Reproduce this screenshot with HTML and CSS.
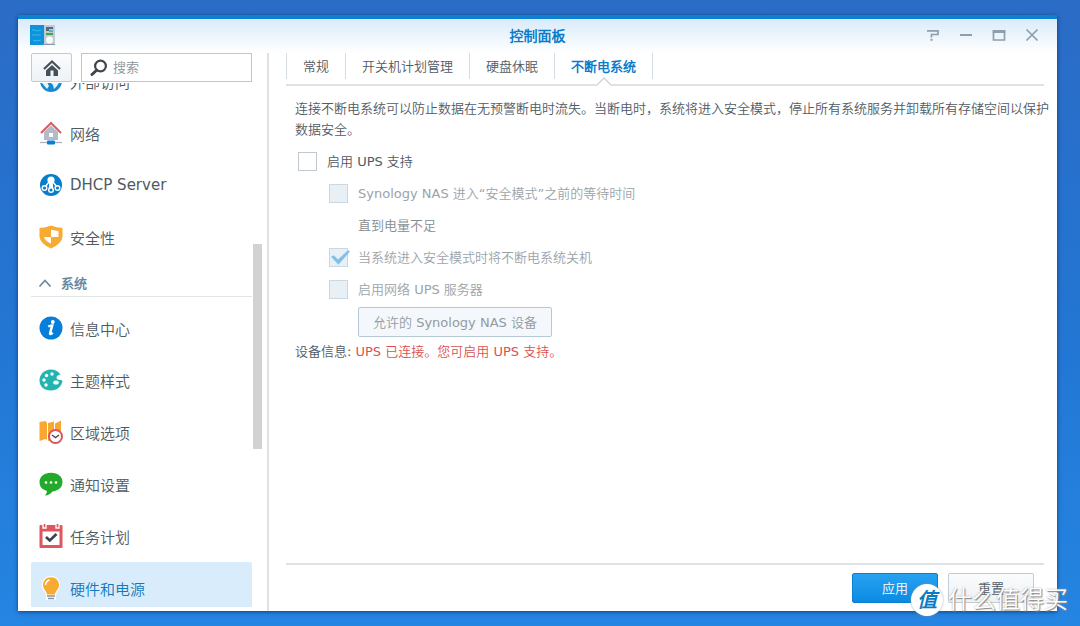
FILE: index.html
```html
<!DOCTYPE html>
<html lang="zh-CN">
<head>
<meta charset="utf-8">
<meta name="viewport" content="width=device-width, initial-scale=1">
<title>控制面板</title>
<link rel="stylesheet" href="styles.css">
</head>
<body class="desktop">
<div class="window">
  <header class="titlebar">
    <svg class="app-icon" viewBox="0 0 26 22" aria-hidden="true">
      <rect x="13" y="1" width="12" height="20" fill="#c3cbd2"/><rect x="0" y="1" width="14" height="20" fill="#0d93dc"/>
      <path d="M2 6h3l2 1 4-1M2 11h9M3 16l3 1 5-1" stroke="#39b9ee" fill="none"/>
      <path d="M16 4h7M16 6h3" stroke="#34495c" stroke-width="1.4"/><path d="M19 7h4" stroke="#1ca6df" stroke-width="1.4"/><path d="M16 10h7" stroke="#39ad45" stroke-width="2"/>
      <circle cx="19.500" cy="16" r="3.400" fill="#fff"/><path d="M13 20.500h12" stroke="#8d99a4"/>
    </svg>
    <h1 class="title">控制面板</h1>
    <div class="controls">
      <button class="control" aria-label="帮助"><svg viewBox="0 0 14 14"><path d="M1 2.800h11v3.700H5.500v3" fill="none" stroke="#8f9dad" stroke-width="1.700"/><path d="M4.500 10.800h2v2h-2z" fill="#8f9dad"/></svg></button>
      <button class="control" aria-label="最小化"><svg viewBox="0 0 14 14"><path d="M1 7h12" stroke="#8f9dad" stroke-width="2"/></svg></button>
      <button class="control" aria-label="最大化"><svg viewBox="0 0 14 14"><path d="M1.500 2.500v9.500h11v-9.500" fill="none" stroke="#8f9dad" stroke-width="1.700"/><path d="M.700 3.500h12.600" stroke="#8f9dad" stroke-width="3"/></svg></button>
      <button class="control" aria-label="关闭"><svg viewBox="0 0 14 14"><path d="M1.500 1.500l11 11M12.500 1.500l-11 11" stroke="#8f9dad" stroke-width="1.700"/></svg></button>
    </div>
  </header>

  <div class="body">
    <aside class="sidebar">
      <div class="tools">
        <button class="home" aria-label="主页"><svg viewBox="0 0 18 18"><path d="M1 10L9 2.500 17 10" fill="none" stroke="#46505a" stroke-width="2.200"/><path d="M3 11.500L9 6l6 5.500V17H3z" fill="#46505a"/><path d="M7.500 11.500h3V17h-3z" fill="#f3f6f9"/></svg></button>
        <div class="search">
          <svg class="search-icon" viewBox="0 0 18 18" aria-hidden="true"><circle cx="10.500" cy="7" r="5.400" fill="none" stroke="#3e454c" stroke-width="2.200"/><path d="M6.300 11.500L2 15.500" stroke="#3e454c" stroke-width="3" stroke-linecap="round"/></svg>
          <input class="search-input" type="text" placeholder="搜索" aria-label="搜索">
        </div>
      </div>
      <div class="scroller">
        <nav class="nav">
          <a class="item first" href="#"><svg class="icon" viewBox="0 0 24 24"><circle cx="12" cy="12" r="11" fill="#1689d6"/><path d="M3 6l7-2 1 5-3 4 2 4-2 3-5-6zM14 11l7 1-3 5-3 3-1-4-2-2z" fill="#e6f4fc"/></svg>外部访问</a>
          <a class="item" href="#"><svg class="icon" viewBox="0 0 24 24"><path d="M5 11l7-6.500 7 6.500v8H5z" fill="#b2bbc7"/><path d="M10 12h4v4h-4z" fill="#fff"/><path d="M2 12L12 2l10 10" fill="none" stroke="#dc5c61" stroke-width="2"/><path d="M1 21.500h22" stroke="#aab4c0" stroke-width="1.300"/><rect x="8" y="19.500" width="8" height="4" rx="1" fill="#087fd0"/></svg>网络</a>
          <a class="item" href="#"><svg class="icon" viewBox="0 0 24 24"><circle cx="12" cy="12" r="11" fill="#087dce"/><circle cx="12" cy="7" r="3.600" fill="#fff"/><path d="M11 9h2l.5 6h-3zM10 9L6 14M14 9l4 5" fill="#fff" stroke="#fff" stroke-width="1.400"/><g fill="#087dce" stroke="#fff" stroke-width="1.400"><circle cx="5.500" cy="15" r="2.300"/><circle cx="12" cy="17" r="2.300"/><circle cx="18.500" cy="15" r="2.300"/></g></svg>DHCP Server</a>
          <a class="item" href="#"><svg class="icon" viewBox="0 0 24 24"><path d="M.500 3Q7 2.500 12 .500 17 2.500 23.500 3v9q-1 7-11.500 11.500Q1.500 19 .500 12z" fill="#f8aa31"/><path d="M12 4.500q4 1.200 7.500 1.500v6H12v6.500Q6 16 5 12h7z" fill="#fff"/></svg>安全性</a>
          <h2 class="group"><svg class="chevron" viewBox="0 0 14 14" aria-hidden="true"><path d="M1.500 10.500L7 4.500l5.500 6" fill="none" stroke="#6889a2" stroke-width="1.700"/></svg>系统</h2>
          <a class="item" href="#"><svg class="icon" viewBox="0 0 24 24"><circle cx="12" cy="12" r="11.500" fill="#087edb"/><circle cx="13.800" cy="6" r="1.900" fill="#fff"/><path d="M9.200 10.500q2-.800 4-1l-2.200 8q-.200 1.500 2.700-.700" fill="none" stroke="#fff" stroke-width="2.400"/></svg>信息中心</a>
          <a class="item" href="#"><svg class="icon" viewBox="0 0 24 24"><path d="M12 1.500C5 1.500.500 6.500.500 12.500S5 22.500 12 22.500c6 0 10.500-4 11.500-9.500l-1.500-1q-4 .500-4.500-2t4-3.500C19 3 16 1.500 12 1.500z" fill="#22b5b0"/><g fill="#fff"><circle cx="5" cy="12" r="1.700"/><circle cx="7.500" cy="7.500" r="1.700"/><circle cx="13" cy="6" r="1.700"/><circle cx="7" cy="17" r="1.700"/><ellipse cx="17" cy="14.500" rx="2.800" ry="2"/></g></svg>主题样式</a>
          <a class="item" href="#"><svg class="icon" viewBox="0 0 24 24"><path d="M.500 2l6-1 1.500 2v17l-1.500-1-6 2zM9 3l6-1.500V20l-6 1zM16 3.500l6-3V17h-6z" fill="#f8a832"/><circle cx="16.500" cy="16.500" r="6.500" fill="#fff" stroke="#dc555d" stroke-width="2"/><path d="M13 15l3.500 2.500L20 15" fill="none" stroke="#46505a" stroke-width="1.500"/></svg>区域选项</a>
          <a class="item" href="#"><svg class="icon" viewBox="0 0 24 24"><path d="M12 .800c7 0 11.500 4 11.500 9.200 0 6-5 9-10 9.400Q11 23 6 23.500q2-2 2-4.500C3 17.500.500 14.500.500 10 .500 5 5 .800 12 .800z" fill="#24aa2b"/><g fill="#fff"><circle cx="7" cy="10.500" r="1.300"/><circle cx="12" cy="10.500" r="1.300"/><circle cx="17" cy="10.500" r="1.300"/></g></svg>通知设置</a>
          <a class="item" href="#"><svg class="icon" viewBox="0 0 24 24"><rect x=".500" y="1" width="23" height="23" rx="1" fill="#df575c"/><path d="M3.500 7.500h17V21h-17z" fill="#fff"/><path d="M4 0v4h3V0M17 0v4h3V0" fill="#df575c" stroke="#fff" stroke-width="1.300"/><path d="M7 13l3.800 3.500L17.500 10" fill="none" stroke="#38444d" stroke-width="2.600"/></svg>任务计划</a>
          <a class="item active" href="#" aria-current="page"><svg class="icon" viewBox="0 0 24 24"><path d="M12 0c5.500 0 9 4 9 9 0 4-3 6.500-4 9.500V24H7v-5.500C6 15.500 3 13 3 9c0-5 3.500-9 9-9z" fill="#fff"/><path d="M12 1.200c5 0 8 3.500 8 7.800 0 4-3.500 6-4 9.500H8C7.500 15 4 13 4 9c0-4.300 3-7.800 8-7.800z" fill="#f8ab32"/><path d="M6.500 9q.500-4 4-5" fill="none" stroke="#fff" stroke-width="1.500"/><path d="M8 20h8M9 22.500h6" stroke="#89939a" stroke-width="1.500"/></svg>硬件和电源</a>
        </nav>
        <div class="track"><div class="thumb"></div></div>
      </div>
    </aside>

    <main class="main">
      <div class="tabs" role="tablist">
        <button class="tab" role="tab" aria-selected="false">常规</button>
        <button class="tab" role="tab" aria-selected="false">开关机计划管理</button>
        <button class="tab" role="tab" aria-selected="false">硬盘休眠</button>
        <button class="tab selected" role="tab" aria-selected="true">不断电系统<svg class="notch" viewBox="0 0 14 9" aria-hidden="true"><path d="M0 9V8L7 1l7 7v1z" fill="#fff"/><path d="M0 8L7 1l7 7" fill="none" stroke="#d3d7da" stroke-width="1.500"/></svg></button>
      </div>
      <form class="content">
        <p class="intro">连接不断电系统可以防止数据在无预警断电时流失。当断电时，系统将进入安全模式，停止所有系统服务并卸载所有存储空间以保护数据安全。</p>
        <div class="row"><input class="check" type="checkbox" id="ups"><label for="ups">启用 UPS 支持</label></div>
        <div class="sub">
          <div class="row muted"><input class="check" type="checkbox" id="wait" disabled><label for="wait">Synology NAS 进入“安全模式”之前的等待时间</label></div>
          <div class="row note">直到电量不足</div>
          <div class="row muted"><input class="check" type="checkbox" id="off" checked disabled><label for="off">当系统进入安全模式时将不断电系统关机</label></div>
          <div class="row muted"><input class="check" type="checkbox" id="server" disabled><label for="server">启用网络 UPS 服务器</label></div>
          <button class="button devices" type="button" disabled>允许的 Synology NAS 设备</button>
        </div>
        <p class="info">设备信息: <span class="status">UPS 已连接。您可启用 UPS 支持。</span></p>
      </form>
      <footer class="footer">
        <button class="button primary" type="button">应用</button>
        <button class="button" type="button">重置</button>
      </footer>
    </main>
  </div>
</div>
<div class="watermark"><span class="badge">值</span><span>什么值得买</span></div>
</body>
</html>
```

FILE: styles.css
```css
* { box-sizing: border-box; }

.desktop {
  position: relative;
  display: flex;
  min-height: 100vh;
  margin: 0;
  padding: 15px 23px 15px 18px;
  overflow: hidden;
  background: linear-gradient(#2b6cc6, #2375d2 50%, #2585e2);
  color: #505a63;
  font-family: "DejaVu Sans", "Noto Sans CJK SC DemiLight", "Noto Sans CJK SC Light", "Noto Sans CJK SC", sans-serif;
  font-size: 13px;
  font-weight: 400;
}

button, input { font: inherit; color: inherit; }
svg { display: block; flex: none; }

.window {
  display: flex;
  flex: 1;
  flex-direction: column;
  min-width: 0;
  border-top: 4px solid #0f80d0;
  background: linear-gradient(#d9ebf9, #fff 34px);
  box-shadow: 0 1px 4px rgba(0, 20, 60, .6);
}

.titlebar {
  display: grid;
  grid-template-columns: 1fr auto 1fr;
  align-items: center;
  height: 34px;
  padding: 0 18px 2px;
}
.app-icon { width: 26px; height: 22px; margin-left: -6px; }
.title { margin: 0; color: #0b7ac9; font-size: 14px; font-weight: 700; }
.controls { display: flex; justify-content: flex-end; gap: 19px; }
.control { width: 14px; height: 14px; padding: 0; border: 0; background: none; }

.body { display: flex; flex: 1; min-height: 0; }

.sidebar {
  display: flex;
  flex: none;
  flex-direction: column;
  width: 251px;
  border-right: 2px solid #dfe2e5;
}
.tools { display: flex; gap: 9px; padding: 0 15px 0 13px; }
.home {
  display: grid;
  place-items: center;
  width: 41px;
  height: 29px;
  padding: 0;
  border: 1px solid #bfcbd6;
  border-radius: 2px;
  background: linear-gradient(#fbfcfd, #edf2f7);
}
.home svg { width: 18px; height: 18px; }
.search {
  display: flex;
  flex: 1;
  align-items: center;
  gap: 5px;
  min-width: 0;
  height: 29px;
  padding-left: 8px;
  border: 1px solid #b6c8d5;
  background: #fff;
}
.search-icon { width: 18px; height: 18px; }
.search-input {
  flex: 1;
  min-width: 0;
  padding: 0;
  border: 0;
  outline: 0;
  background: none;
}
.search-input::placeholder { color: #8c959d; opacity: 1; }

.scroller {
  display: flex;
  flex: 1 1 0;
  min-height: 0;
  margin: 1px 0 4px;
  overflow: hidden;
}
.nav { flex: 1; padding-left: 13px; }
.item {
  display: flex;
  align-items: center;
  gap: 7px;
  height: 52px;
  padding-left: 8px;
  color: #505a63;
  font-size: 15px;
  text-decoration: none;
}
.first { margin-top: -28px; }
.active { border-radius: 2px; background: #d8ecfc; color: #1379bd; }
.icon { width: 24px; height: 24px; }
.group {
  display: flex;
  align-items: center;
  gap: 9px;
  height: 34px;
  margin: 0 0 5px;
  padding: 6px 0 0 7px;
  border-bottom: 1px solid #dfe5e9;
  color: #6587a0;
  font-size: 13px;
  font-weight: 700;
}
.chevron { width: 14px; height: 14px; }
.track { width: 15px; padding: 161px 5px 0 1px; }
.thumb { height: 205px; background: #d2d2d2; }

.main { display: flex; flex: 1; flex-direction: column; min-width: 0; padding-left: 17px; }
.tabs {
  display: flex;
  height: 33px;
  margin-right: 13px;
  padding-bottom: 5px;
  border-bottom: 2px solid #dfe1e4;
}
.tab {
  position: relative;
  height: 26px;
  padding: 0 16px 2px;
  border: 0;
  border-left: 1px solid #d5dce1;
  background: none;
  white-space: nowrap;
}
.selected { border-right: 1px solid #d5dce1; color: #0b7ac9; font-weight: 700; }
.notch {
  position: absolute;
  bottom: -7px;
  left: 50%;
  width: 14px;
  height: 9px;
  margin-left: -7px;
}

.content { flex: 1; padding: 12px 0 0 9px; }
.intro { margin: 0 0 5px; line-height: 21px; }
.row { display: flex; align-items: center; gap: 10px; height: 32px; padding-left: 3px; }
.row label { padding-bottom: 2px; }
.check {
  flex: none;
  width: 19px;
  height: 19px;
  margin: 0;
  appearance: none;
  border: 1px solid #c2c9ce;
  background: #fff;
}
.check:disabled { border-color: #cad8e1; background: #e9f0f5; }
.check:checked::before {
  content: "";
  display: block;
  width: 20px;
  height: 17px;
  background: #83c0e8;
  clip-path: polygon(5% 49%, 19% 40%, 40% 64%, 90% 10%, 100% 17%, 42% 96%);
}
.sub { padding-left: 31px; }
.muted { color: #9ba3aa; }
.note { padding: 0 0 2px 32px; color: #858c91; }
.button {
  height: 30px;
  min-width: 86px;
  padding: 0 14px 2px;
  border: 1px solid #c1ccd5;
  border-radius: 2px;
  background: linear-gradient(#fafcfd, #edf2f7);
}
.devices { margin: 2px 0 0 32px; border-color: #b6c8d3; background: #f4f8fc; color: #929ba2; }
.info { margin: 4px 0 0; line-height: 21px; }
.status { color: #dc5050; }
.footer {
  display: flex;
  justify-content: flex-end;
  gap: 10px;
  margin-right: 13px;
  padding: 8px 10px;
  border-top: 2px solid #dfe2e5;
}
.primary { border-color: #0b80cf; background: linear-gradient(#28a2f2, #0a8be2); color: #fff; }

.watermark {
  position: absolute;
  right: 12px;
  bottom: 10px;
  display: flex;
  align-items: center;
  gap: 5px;
  color: #fff;
  font-size: 24px;
  line-height: 32px;
  text-shadow: 1px 1px 1px #888, 0 0 2px #aaa;
  pointer-events: none;
}
.badge {
  width: 32px;
  height: 32px;
  border-radius: 50%;
  background: #fff;
  box-shadow: 0 0 2px #999;
  color: #087bc5;
  font-size: 20px;
  font-style: italic;
  font-weight: 700;
  text-align: center;
  text-shadow: none;
}
```
